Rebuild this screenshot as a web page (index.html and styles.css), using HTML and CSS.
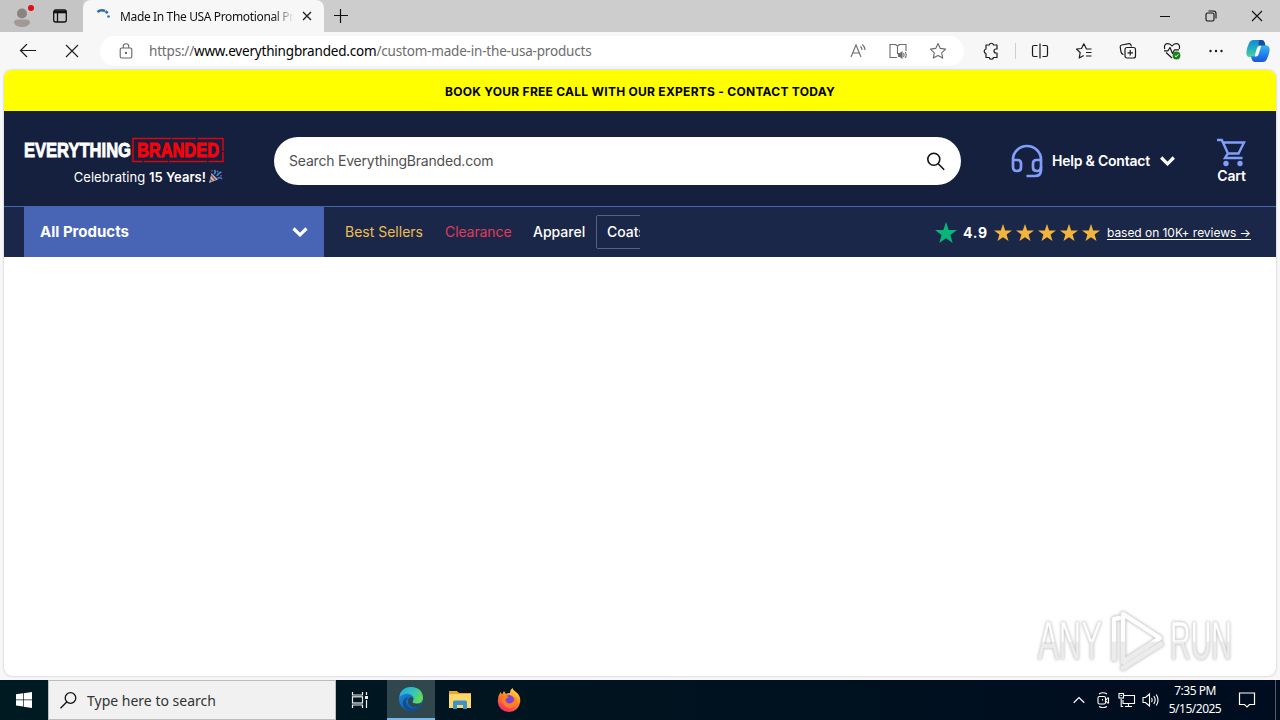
FILE: index.html
```html
<!DOCTYPE html>
<html lang="en">
<head>
  <meta charset="UTF-8" />
  <meta name="viewport" content="width=device-width, initial-scale=1.0"/>
  <title>Made In The USA Promotional Products</title>
  <link rel="stylesheet" href="styles.css">
</head>
<body>
  <svg width="0" height="0" class="defs">
    <defs>
      <linearGradient id="edgeA" x1="0" y1="0" x2="1" y2="0.4"><stop offset="0" stop-color="#2aa5dc"/><stop offset=".6" stop-color="#32c3c0"/><stop offset="1" stop-color="#62d957"/></linearGradient>
      <linearGradient id="edgeB" x1="0" y1="0" x2="1" y2="1"><stop offset="0" stop-color="#1b8fdd"/><stop offset="1" stop-color="#0b4a9c"/></linearGradient>
      <linearGradient id="copA" x1="0" y1="0" x2="0" y2="1"><stop offset="0" stop-color="#1a86d8"/><stop offset=".5" stop-color="#1fb0c0"/><stop offset="1" stop-color="#4fd39a"/></linearGradient>
      <linearGradient id="copB" x1="0" y1="0" x2="0" y2="1"><stop offset="0" stop-color="#31b8f0"/><stop offset="1" stop-color="#1a55e0"/></linearGradient>
      <linearGradient id="fox" x1=".8" y1="0" x2=".3" y2="1"><stop offset="0" stop-color="#ffe14a"/><stop offset=".45" stop-color="#ff8a1e"/><stop offset="1" stop-color="#f5246b"/></linearGradient>
      <linearGradient id="wm" gradientUnits="userSpaceOnUse" x1="0" y1="0" x2="0" y2="64"><stop offset=".5" stop-color="#fff"/><stop offset=".52" stop-color="#ececec"/></linearGradient>
      <polygon id="star" points="9,0 11.2,6.4 18,6.5 12.600,10.600 14.500,17 9,13.200 3.500,17 5.400,10.600 0,6.500 6.800,6.400"/>
    </defs>
  </svg>

  <div class="tab-bar">
    <div class="profile">
      <svg width="26" height="24" viewBox="0 0 26 24"><circle cx="12" cy="9.500" r="5" fill="#8b8380"/><path d="M4 19q0-3.500 3.500-3.500h9q3.500 0 3.500 3.500-2 4-8 4t-8-4z" fill="#a09a97"/><circle cx="21" cy="4" r="3" fill="#e30b17"/></svg>
    </div>
    <div class="workspace">
      <svg width="16" height="16" viewBox="0 0 16 16" fill="none" stroke="#111" stroke-width="1.300"><rect x="1.700" y="2" width="12.600" height="12" rx="2"/><path d="M2 4h12" stroke-width="2.600"/><path d="M5.500 5v9"/></svg>
    </div>
    <div class="tab">
      <svg width="16" height="16" viewBox="0 0 16 16" fill="none" stroke="#2a6ca8" stroke-width="2.500"><path d="M1.500 4Q5 1.200 9 3"/><path d="M9.500 3.200l2.300 1.900M12.200 7.500l.6 2"/></svg>
      <span class="tab-title">Made In The USA Promotional Products</span>
      <svg width="10" height="10" viewBox="0 0 10 10" stroke="#222" stroke-width="1.400"><path d="M1 1l8 8M9 1l-8 8"/></svg>
    </div>
    <div class="new-tab"><svg width="14" height="14" viewBox="0 0 14 14" stroke="#111" stroke-width="1.200"><path d="M6.500 0v14M0 6.500h14"/></svg></div>
    <div class="window-controls">
      <div><svg width="12" height="12" viewBox="0 0 12 12" stroke="#111"><path d="M1 6.500h10"/></svg></div>
      <div><svg width="12" height="12" viewBox="0 0 12 12" fill="none" stroke="#111" stroke-width="1.100"><rect x="1" y="3" width="8" height="8" rx="1.500"/><path d="M3.500 1h5q2.500 0 2.500 2.500v5"/></svg></div>
      <div><svg width="12" height="12" viewBox="0 0 12 12" stroke="#111" stroke-width="1.100"><path d="M1 1l10 10M11 1l-10 10"/></svg></div>
    </div>
  </div>

  <div class="toolbar">
    <div class="tool back"><svg width="18" height="14" viewBox="0 0 18 14" fill="none" stroke="#1b1b1b" stroke-width="1.200"><path d="M17 6.500H1.500M8 0L1.500 6.500l6.500 6.500"/></svg></div>
    <div class="tool"><svg width="14" height="14" viewBox="0 0 14 14" stroke="#1b1b1b" stroke-width="1.100"><path d="M1 1l12 12M13 1L1 13"/></svg></div>
    <div class="address">
      <svg class="lock" width="14" height="16" viewBox="0 0 14 16" fill="none" stroke="#666" stroke-width="1.100"><rect x="1.200" y="5" width="11.600" height="10" rx="1.500"/><path d="M4.200 5V3.500a2.800 2.800 0 0 1 5.600 0V5"/><circle cx="7" cy="10" r=".6" fill="#666"/></svg>
      <span class="url">https://<b>www.everythingbranded.com</b>/custom-made-in-the-usa-products</span>
      <div class="address-icons">
        <svg width="18" height="16" viewBox="0 0 18 16" fill="none" stroke="#6b6b6b" stroke-width="1.100"><path d="M2 14L7 2 12 14M3.800 10h6.400M11.500 3.500q1.500 1.500 1.500 3.500M13.300 1.500q2.700 2.300 2.700 5.500"/></svg>
        <svg width="18" height="16" viewBox="0 0 18 16" fill="none" stroke="#6b6b6b" stroke-width="1.100"><path d="M8 14.500H1V1.500h5.500L8.500 3l2-1.500H17V8M8.500 3v8"/><path d="M9.500 10.500v3h1.500l2 1.500V9l-2 1.500z" fill="#6b6b6b"/><path d="M14.500 10q1 2 0 4M16.300 9q1.700 3 0 6"/></svg>
        <svg width="18" height="18" viewBox="0 0 18 18" fill="none" stroke="#6b6b6b" stroke-width="1.100" stroke-linejoin="round"><path d="M9 1.500l2.300 4.900 5.300.7-3.900 3.700 1 5.300L9 13.500l-4.700 2.600 1-5.300L1.400 7.100l5.300-.7z"/></svg>
      </div>
    </div>
    <div class="tool extensions"><svg width="18" height="18" viewBox="0 0 18 18" fill="none" stroke="#1b1b1b" stroke-width="1.200" stroke-linejoin="round"><path d="M4 3h3.200a2.200 2.200 0 0 1 4.300 0H15v4h-1a2 2 0 0 0 0 4h1v4.500h-3.500a2.200 2.200 0 0 1-4.300 0H4V11.500a2.300 2.300 0 0 1 0-4.500z"/></svg></div>
    <div class="divider"></div>
    <div class="tool"><svg width="18" height="16" viewBox="0 0 18 16" fill="none" stroke="#1b1b1b" stroke-width="1.200"><path d="M6.500 2.500H3q-1.500 0-1.500 1.500v8q0 1.500 1.500 1.500h3.500M11.500 2.500H15q1.500 0 1.500 1.500v8q0 1.500-1.500 1.500h-3.500M9 .5v15"/></svg></div>
    <div class="tool"><svg width="18" height="18" viewBox="0 0 18 18" fill="none" stroke="#1b1b1b" stroke-width="1.200" stroke-linejoin="round"><path d="M16.500 7h-5L8.800 1.800 6.500 6.500 1.500 7l3.700 3.700-1 5.300 4.500-2.500M11 10.500h5.500M11 14h5.500"/></svg></div>
    <div class="tool"><svg width="18" height="18" viewBox="0 0 18 18" fill="none" stroke="#1b1b1b" stroke-width="1.200"><path d="M4.500 12.500Q2.500 12 2 10L1.200 5q-.2-1.600 1.500-2l7.300-1.300q1.500-.2 2 1.300l.3 1.500"/><rect x="6" y="5.500" width="10.500" height="10.500" rx="2"/><path d="M11.200 8v5.500M8.500 10.800h5.500"/></svg></div>
    <div class="tool"><svg width="18" height="18" viewBox="0 0 18 18" fill="none" stroke="#1b1b1b" stroke-width="1.200" stroke-linejoin="round"><path d="M1.700 7Q.5 2 4.500 1.700 7 1.500 9 4q2-2.500 4.500-2.300Q17.500 2 16.300 7M3 10.500L9 16M1 8.800h4L7 5.500l2.500 6 2-3.700H16"/><circle cx="13.500" cy="13.500" r="3.900" fill="#17801b" stroke="none"/><path d="M11.800 13.600l1.300 1.200 2.200-2.500" stroke="#fff" stroke-width="1"/></svg></div>
    <div class="tool"><svg width="16" height="4" viewBox="0 0 16 4" fill="#1b1b1b"><circle cx="2.500" cy="2" r="1.200"/><circle cx="8" cy="2" r="1.200"/><circle cx="13.500" cy="2" r="1.200"/></svg></div>
    <div class="tool copilot"><svg width="24" height="24" viewBox="0 0 24 24"><path d="M7 1h9q2 0 2.800 3l.7 3H14q-2 0-2.800 2.500L9.500 15q-.8 3-3 3H3.500Q0 18 .4 13 1 8 3.300 3.500 4.500 1 7 1z" fill="url(#copA)"/><path d="M13 1h3q2 0 2.800 3l.7 3H14q-1.500 0-1.500-3z" fill="#14509f"/><path d="M17 23H8.500q-2 0-2.800-3L5 17.500q3.500.5 4.500-2.500l1.700-5.500Q12 6.500 14.500 6.500h5.500q4 0 3.600 5-.6 4.500-2.900 9-1.200 2.500-3.700 2.500z" fill="url(#copB)"/><path d="M10.800 9.500q.7-2.500 3-2.700h1.500l-2.700 8.500q-.7 2.200-2.600 2.200H8.500z" fill="#f7f7f7"/></svg></div>
  </div>

  <div class="page">
    <div class="promo-bar">BOOK YOUR FREE CALL WITH OUR EXPERTS - CONTACT TODAY</div>
    <div class="header">
      <div class="logo">
        <svg width="201" height="26" viewBox="0 0 201 26">
          <text class="logo-text" x="0" y="20" fill="#fff" stroke="#fff" textLength="107" lengthAdjust="spacingAndGlyphs">EVERYTHING</text>
          <rect x="109" y="1.500" width="90" height="23" fill="none" stroke="#dc060c" stroke-width="1.500" stroke-dasharray="38 1 24 1.500"/>
          <text class="logo-text" x="113" y="20" fill="#fa0209" stroke="#fa0209" textLength="82" lengthAdjust="spacingAndGlyphs">BRANDED</text>
        </svg>
        <div class="tagline"><span>Celebrating <b>15 Years!</b></span>
          <svg width="15" height="15" viewBox="0 0 15 15"><path d="M3.500 4L1 14l9-3.500z" fill="#c5b2ae"/><path d="M3.200 6l4.500 5.500M2 10l2.500 2.700" stroke="#805860" stroke-width="1.200"/><path d="M6 5q2-1 .5-4M9 7q1-3 4.500-4" fill="none" stroke="#318de0" stroke-width="1.800"/><path d="M9.500 9.500q2.500-2 4.500.5" fill="none" stroke="#3b72d2" stroke-width="1.800"/><path d="M9 2l1 1M12.500 6.500l1 .5M3.500 1.500l.8.800" stroke="#e8505e" stroke-width="1.500"/></svg>
        </div>
      </div>
      <div class="search">
        <span>Search EverythingBranded.com</span>
        <svg width="20" height="20" viewBox="0 0 20 20" fill="none" stroke="#111" stroke-width="1.600"><circle cx="7.800" cy="8.300" r="6"/><path d="M12.200 12.700l6 6"/></svg>
      </div>
      <div class="help">
        <svg width="32" height="34" viewBox="0 0 32 34" fill="none" stroke="#809ffb" stroke-width="2.700"><path d="M2 23V15.500a14 13.500 0 0 1 28 0V26q0 6-6 6h-8.500"/><path d="M2 16h4.500q3.500 0 3.500 3.500v4q0 3.500-4 3.500t-4-4M30 16h-4.500q-3.500 0-3.500 3.500v4q0 3.500 4 3.500t4-4"/></svg>
        <span>Help &amp; Contact</span>
        <svg class="chevron" width="16" height="10" viewBox="0 0 16 10" fill="none" stroke="#fff" stroke-width="3.200"><path d="M1.200 1.500L7.500 7.800l6.300-6.300"/></svg>
      </div>
      <div class="cart">
        <svg width="29" height="29" viewBox="0 0 29 29" fill="none" stroke="#809ffb" stroke-width="2.400"><path d="M0 2h4.800l6.200 13.500h10.500L27 4.500H6M10.800 15.500L8 20h17.500"/><circle cx="9" cy="25.500" r="2.700" fill="#809ffb" stroke="none"/><circle cx="23" cy="25.500" r="2.700" fill="#809ffb" stroke="none"/></svg>
        <span>Cart</span>
      </div>
    </div>
    <div class="nav">
      <div class="all-products">
        <span>All Products</span>
        <svg width="16" height="10" viewBox="0 0 16 10" fill="none" stroke="#fff" stroke-width="3.200"><path d="M1.500 1.500L8 7.800l6.500-6.300"/></svg>
      </div>
      <div class="nav-links">
        <a class="best">Best Sellers</a>
        <a class="clearance">Clearance</a>
        <a class="apparel">Apparel</a>
        <a class="boxed">Coats</a>
      </div>
      <div class="rating">
        <svg width="22" height="21" viewBox="0 0 18 17" fill="#08b67a"><use href="#star"/></svg>
        <b>4.9</b>
        <div class="stars">
          <svg width="18" height="17" fill="#f3b43c"><use href="#star"/></svg>
          <svg width="18" height="17" fill="#f3b43c"><use href="#star"/></svg>
          <svg width="18" height="17" fill="#f3b43c"><use href="#star"/></svg>
          <svg width="18" height="17" fill="#f3b43c"><use href="#star"/></svg>
          <svg width="18" height="17" fill="#f3b43c"><use href="#star"/></svg>
        </div>
        <a class="reviews">based on 10K+ reviews →</a>
      </div>
    </div>
    <svg class="watermark" width="200" height="66" viewBox="0 0 200 66">
      <g class="mark">
        <text x="2" y="50" textLength="64" lengthAdjust="spacingAndGlyphs">ANY</text>
        <text x="134" y="50" textLength="62" lengthAdjust="spacingAndGlyphs">RUN</text>
        <path class="edge" d="M78 50V10l5-1M87 5l37 24-37 24zM87 59l38-24"/>
        <path class="line" d="M78 50V10l5-1M87 5l37 24-37 24zM87 59l38-24"/>
      </g>
    </svg>
  </div>

  <div class="taskbar">
    <div class="start"><svg width="16" height="16" viewBox="0 0 16 16" fill="#fff"><path d="M0 2.300L7 1.300v6.200H0zM7.700 1.200L16 0v7.500H7.700zM0 8.300h7v6.300l-7-1zM7.700 8.300H16V16l-8.300-1.200z"/></svg></div>
    <div class="task-search">
      <svg width="18" height="18" viewBox="0 0 18 18" fill="none" stroke="#111" stroke-width="1.300"><circle cx="10.500" cy="7" r="5.300"/><path d="M6.700 11L.5 17.300"/></svg>
      <span>Type here to search</span>
    </div>
    <div class="app view"><svg width="18" height="16" viewBox="0 0 18 16" fill="none" stroke="#eee" stroke-width="1.200"><path d="M1.500 0v3h10V0M1.500 16v-3h10v3M15.500 0v3M15.500 8v8"/><rect x="1.500" y="4.800" width="10" height="6.200"/><path d="M14 5.500h3" stroke-width="3"/></svg></div>
    <div class="app active"><svg width="24" height="24" viewBox="0 0 24 24"><circle cx="12" cy="12" r="12" fill="url(#edgeB)"/><path d="M.3 10Q2 0 12 0q11.500.5 12 11 0 5.500-6.500 5.500-5 0-4-2.500 2-2 .5-4.500Q11 6 6 7 2 8 .3 10z" fill="url(#edgeA)"/><path d="M9.500 10Q4.500 14 9 19.500q5 4.500 12.500.2Q17 25 11 24 3 22.500 4 15q.7-4 5.500-5z" fill="#104e91"/><path d="M10 11q3-1.500 4 .5.800 2-.7 3 .2 2.200 4.200 2.500 3 .2 5-1-2 4.500-7 4.300Q9.500 19.500 9 15q0-2.500 1-4z" fill="#31474e"/></svg></div>
    <div class="app"><svg width="22" height="20" viewBox="0 0 22 20"><path d="M0 1h8l2 2h12v15H0z" fill="#e9a928"/><path d="M0 4h22v14H0z" fill="#fcd869"/><path d="M4 19v-7q0-1.500 1.500-1.500h11q1.500 0 1.500 1.500v7h-4v-4H8v4z" fill="#3b92cf"/></svg></div>
    <div class="app"><svg width="24" height="24" viewBox="0 0 24 24"><path d="M12 24Q2 23.500.8 14 .5 8 3.500 4l1.500 2.500L7 3l2 3q2-1.300 4-1Q12.800 2 15.500 0q.5 2.500 3.500 4 5 4 4.200 10Q21.500 23.500 12 24z" fill="url(#fox)"/><circle cx="12" cy="12.300" r="5.300" fill="#7f43d7"/><path d="M5 9q4-2.500 7 .5-3.500 0-3.500 3 1.500 4 6 2.500 4-2 2.500-6.500 5 5 1 9.500-5 4-10 0Q4 14 5 9z" fill="#ff801d"/></svg></div>
    <div class="tray">
      <div><svg width="12" height="12" viewBox="0 0 12 12" fill="none" stroke="#fff" stroke-width="1.200"><path d="M.7 8.700L6 3.500l5.300 5.200"/></svg></div>
      <div><svg width="14" height="16" viewBox="0 0 14 16" fill="none" stroke="#fff" stroke-width="1.100"><rect x="2" y="4.500" width="7.500" height="7.500" rx="1.500"/><path d="M10 8l1.500-2h1v5h-1L10 9M3 2q4-2.500 8 0M3 14.500q4 2.500 8 0M6.500 7v1.500"/></svg></div>
      <div><svg width="18" height="16" viewBox="0 0 18 16" fill="none" stroke="#fff" stroke-width="1.100"><path d="M6 3.500h10.500v8H5V8M10.500 11.500v2.500M7 14.500h7M3.200 7v7.500h2"/><rect x="1" y="1.500" width="4.500" height="4.500"/><path d="M2.500 3.500h1.500"/></svg></div>
      <div><svg width="18" height="16" viewBox="0 0 18 16" fill="none" stroke="#fff" stroke-width="1.100"><path d="M1 5.500h2.500L7.500 2v12L3.500 10.500H1zM9.500 6q1.300 2 0 4M11.800 4q2.700 4 0 8M14.200 2.500q3.700 5.500 0 11"/></svg></div>
      <div class="clock"><span>7:35 PM</span><span>5/15/2025</span></div>
      <div class="notify"><svg width="18" height="18" viewBox="0 0 18 18" fill="none" stroke="#fff" stroke-width="1.200"><path d="M1.500 2h15v11.500h-5L9 16l-2.500-2.500h-5z"/></svg></div>
      <div class="show-desktop"></div>
    </div>
  </div>
</body>
</html>
```
FILE: styles.css
```css
* { margin: 0; padding: 0; box-sizing: border-box; }
body {
  width: 1280px;
  height: 720px;
  overflow: hidden;
  display: flex;
  flex-direction: column;
  background-color: #f7f7f9;
  font-family: "Noto Sans", "Open Sans", sans-serif;
  color: #111;
}
svg { display: block; flex: none; }
.defs { position: absolute; }
span, a, b { white-space: nowrap; }

/* Browser chrome */
.tab-bar {
  display: flex;
  height: 32px;
  background-color: #cdcdcd;
}
.profile {
  width: 44px;
  padding: 4px 0 0 10px;
  background-color: #c5c5c5;
}
.workspace {
  width: 39px;
  padding: 8px 0 0 8px;
  background-color: #c5c5c5;
}
.tab {
  display: flex;
  align-items: center;
  width: 241px;
  padding-left: 13px;
  background-color: #f7f7f7;
  border-radius: 8px 8px 0 0;
}
.tab-title {
  width: 174px;
  margin: 0 8px;
  overflow: hidden;
  font-size: 12px;
  letter-spacing: -0.36px;
  -webkit-mask-image: linear-gradient(to right, #000 88%, transparent);
  mask-image: linear-gradient(to right, #000 88%, transparent);
}
.new-tab { padding: 9px 0 0 10px; }
.window-controls { display: flex; margin-left: auto; }
.window-controls div {
  display: flex;
  align-items: center;
  justify-content: center;
  width: 46px;
}
.toolbar {
  display: flex;
  align-items: center;
  height: 38px;
  background-color: #f7f7f7;
}
.tool {
  display: flex;
  align-items: center;
  justify-content: center;
  width: 44px;
}
.back { margin-left: 6px; }
.address {
  display: flex;
  align-items: center;
  width: 864px;
  height: 30px;
  margin-left: 6px;
  padding: 0 6px 0 19px;
  background-color: #fff;
  border-radius: 15px;
}
.url {
  margin-left: 16px;
  font-size: 13.5px;
  letter-spacing: -0.19px;
  color: #6d6d6d;
}
.url b { font-weight: 400; color: #000; }
.address-icons { display: flex; margin-left: auto; align-items: center; }
.address-icons svg { margin: 0 11px; }
.extensions { margin-left: 5px; }
.divider { width: 1px; height: 16px; margin: 0 2px; background-color: #cfcfcf; }
.copilot { width: 40px; }

/* Web page */
.page {
  position: relative;
  width: 1272px;
  height: 606px;
  margin: 0 4px;
  background-color: #fff;
  border-radius: 8px;
  box-shadow: 0 0 2px rgba(0,0,0,0.3);
  overflow: hidden;
  font-family: Inter, sans-serif;
}
.promo-bar {
  height: 41px;
  line-height: 43px;
  background-color: #ff0;
  color: #000;
  font-size: 12px;
  font-weight: 700;
  letter-spacing: 0.27px;
  text-align: center;
}
.header {
  display: flex;
  align-items: center;
  height: 95px;
  padding: 4px 30px 0 20px;
  background-color: #151f3e;
  color: #fff;
}
.logo { width: 201px; }
.logo-text { font: 700 21px "Liberation Sans", Arial, sans-serif; stroke-width: 0.9px; }
.tagline {
  display: flex;
  align-items: center;
  justify-content: flex-end;
  gap: 2px;
  height: 20px;
  margin: 4px 0 -2px;
  padding-right: 2px;
  font-size: 13px;
  letter-spacing: 0.04px;
}
.tagline b { font-weight: 600; }
.search {
  display: flex;
  align-items: center;
  justify-content: space-between;
  width: 687px;
  height: 48px;
  margin-left: 49px;
  padding: 0 15px;
  background-color: #fff;
  border-radius: 24px;
  color: #505050;
  font-size: 14px;
  letter-spacing: -0.2px;
}
.help {
  display: flex;
  align-items: center;
  margin-left: 50px;
  font-size: 14px;
  font-weight: 600;
  letter-spacing: -0.22px;
}
.help span { width: 98px; margin: 0 10px 0 9px; }
.cart {
  display: flex;
  flex-direction: column;
  align-items: center;
  margin: 2px 0 0 auto;
  font-size: 14px;
  font-weight: 600;
  line-height: 18px;
  letter-spacing: -0.2px;
}
.nav {
  display: flex;
  height: 51px;
  padding: 0 25px 0 20px;
  background-color: #1a2748;
  border-top: 1px solid #4663b0;
}
.all-products {
  display: flex;
  align-items: center;
  justify-content: space-between;
  width: 300px;
  padding: 0 16px;
  background-color: #4864b5;
  color: #fff;
  font-size: 15px;
  font-weight: 700;
}
.all-products span { padding-bottom: 1px; }
.nav-links {
  display: flex;
  align-items: center;
  width: 316px;
  padding-left: 21px;
  overflow: hidden;
  color: #fff;
  font-size: 14px;
}
.nav-links a { flex: none; }
.best { width: 100px; color: #f0bd4f; }
.clearance { width: 88px; color: #e13a5b; letter-spacing: -0.1px; }
.apparel { width: 63px; font-weight: 500; }
.best, .clearance, .apparel { padding-bottom: 1px; }
.boxed {
  height: 34px;
  padding: 0 10px;
  line-height: 32px;
  border: 1px solid #52628c;
  border-radius: 2px;
  font-weight: 500;
}
.rating {
  display: flex;
  align-items: center;
  margin-left: auto;
  color: #fff;
  font-size: 14px;
}
.rating b { margin: 0 6px; letter-spacing: 0.8px; }
.stars { display: flex; gap: 4px; }
.reviews {
  margin-left: 7px;
  font-size: 12px;
  letter-spacing: -0.04px;
  text-decoration: underline;
  text-underline-offset: 2px;
}
.watermark { position: absolute; left: 1032px; top: 539px; }
.mark {
  filter: drop-shadow(0 0 1.5px rgba(0,0,0,0.3));
}
.mark text {
  font: 400 53px "Liberation Sans", Arial, sans-serif;
  fill: url(#wm);
  stroke: #e4e4e4;
  stroke-width: 0.5;
}
.mark path { fill: none; stroke-linecap: round; stroke-linejoin: round; }
.mark .edge { stroke: #e2e2e2; stroke-width: 5.5; }
.mark .line { stroke: url(#wm); stroke-width: 4; }

/* Taskbar */
.taskbar {
  display: flex;
  height: 40px;
  margin-top: 4px;
  background: linear-gradient(to right, #001a22, #00131f 50%, #000c1f);
}
.start {
  display: flex;
  align-items: center;
  justify-content: center;
  width: 48px;
}
.task-search {
  display: flex;
  align-items: center;
  width: 288px;
  padding-left: 11px;
  gap: 9px;
  background-color: #f1f1f1;
  border: 1px solid #bcbcbc;
  color: #333;
  font-size: 14px;
}
.app {
  display: flex;
  align-items: center;
  justify-content: center;
  width: 49px;
}
.view { width: 51px; padding-right: 3px; }
.active { width: 48px; background-color: #31474e; border-bottom: 2px solid #78b9ed; }
.tray { display: flex; margin-left: auto; color: #fff; }
.tray div {
  display: flex;
  align-items: center;
  justify-content: center;
  width: 24px;
}
.tray .clock {
  flex-direction: column;
  width: 64px;
  font-size: 12px;
  line-height: 18px;
  letter-spacing: -0.5px;
}
.tray .notify { width: 40px; }
.tray .show-desktop { width: 5px; margin-left: 8px; border-left: 1px solid #535b69; }
```
